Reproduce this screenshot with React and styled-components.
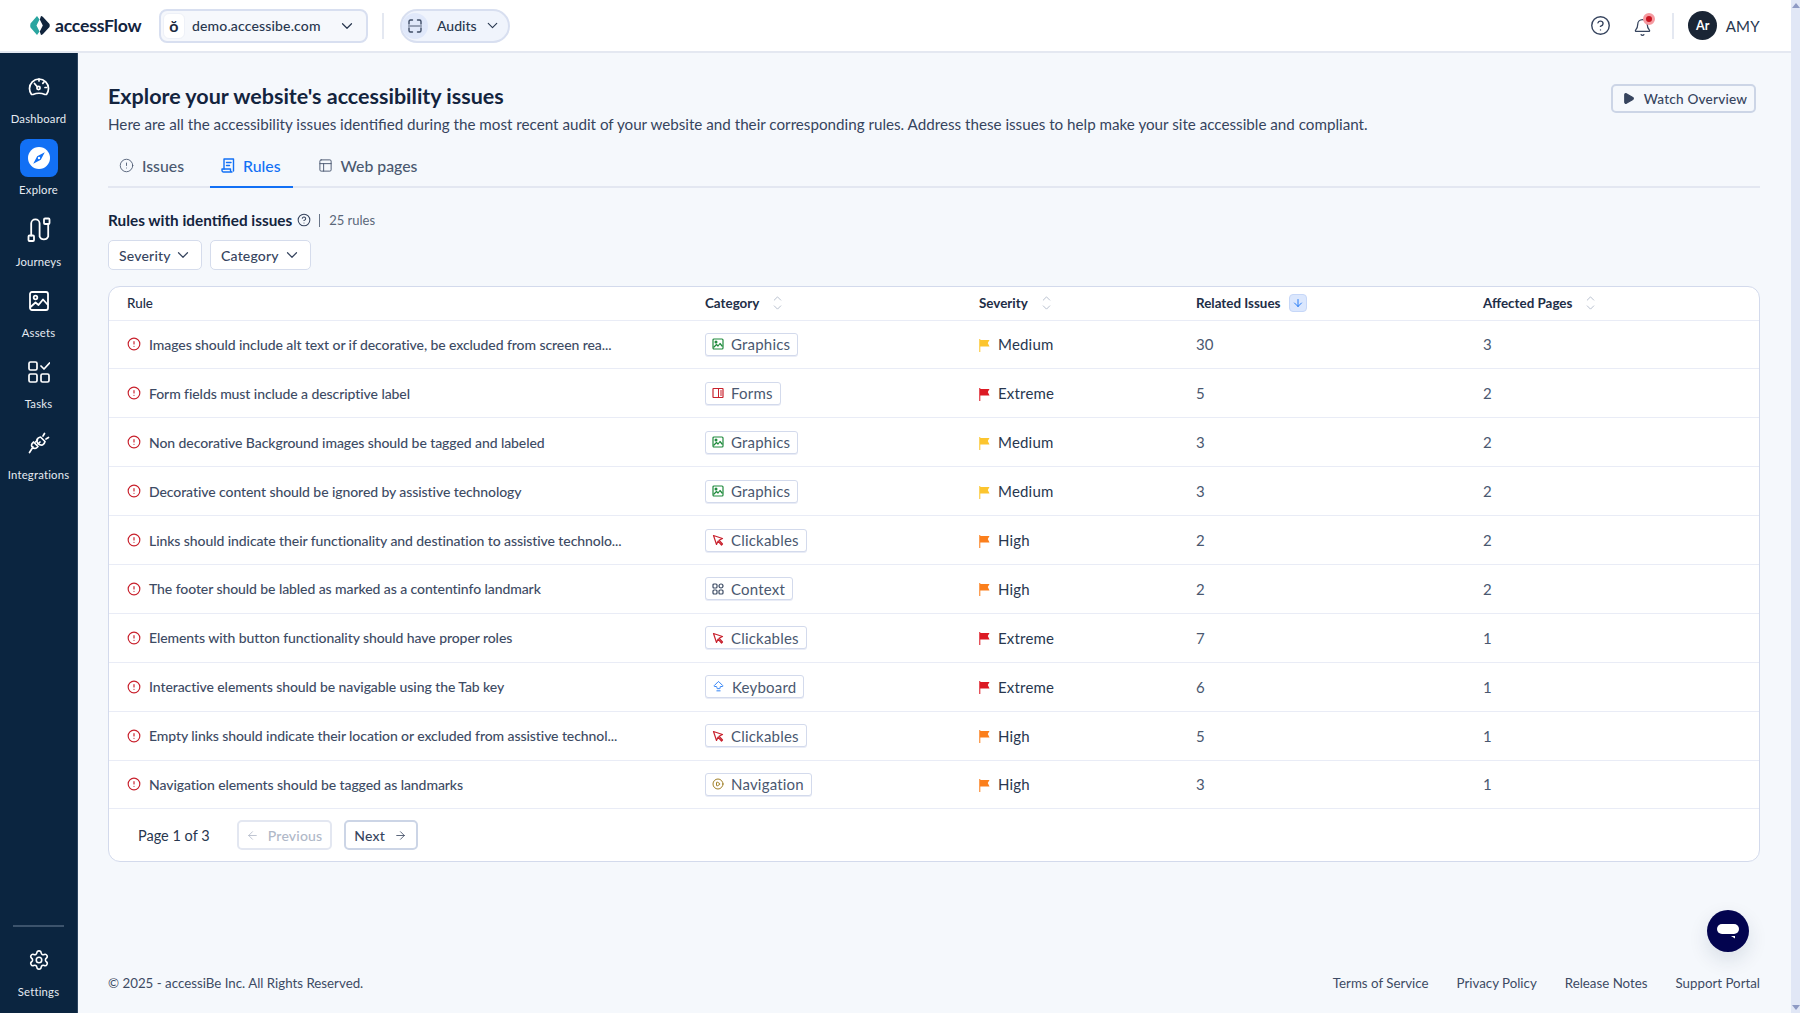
import React from 'react';
import styled, { createGlobalStyle } from 'styled-components';
import {
  ChevronDown, ChevronUp, CircleHelp, Bell, CircleAlert, PanelsTopLeft, ArrowLeft, ArrowRight,
  ArrowDown, ArrowBigUpDash, CirclePlay, Settings, Play,
} from 'lucide-react';

const GlobalStyle = createGlobalStyle`
  html, body { margin: 0; padding: 0; height: 100%; overflow: hidden; }
  body { font-family: "Lato", "Liberation Sans", sans-serif; color: #36445e; background: #f5f8fc; }
  #root { height: 100%; }
  * { box-sizing: border-box; }
`;

const Page = styled.div`
  display: flex;
  height: 1013px;
`;

const Shell = styled.div`
  flex: 1;
  min-width: 0;
  display: flex;
  flex-direction: column;
`;

const ScrollTrack = styled.div`
  width: 9px;
  background: #e1e7f6;
  display: flex;
  flex-direction: column;
  justify-content: space-between;
  align-items: center;
  padding: 3px 0;
`;

const Arrow = styled.span`
  width: 0;
  height: 0;
  border-left: 4px solid transparent;
  border-right: 4px solid transparent;
  ${p => (p.$down ? 'border-top: 5px solid #8e9ac4;' : 'border-bottom: 5px solid #8e9ac4;')}
`;

const Header = styled.header`
  height: 53px;
  flex: none;
  background: #fff;
  border-bottom: 2px solid #e4e8f1;
  display: flex;
  align-items: center;
  padding: 0 31px 0 30px;
`;

const Logo = styled.div`
  display: flex;
  align-items: center;
  gap: 5px;
  width: 129px;
  font-size: 17.6px;
  font-weight: 700;
  letter-spacing: -0.2px;
  color: #13243e;
`;

const DomainSelect = styled.div`
  width: 209px;
  height: 34px;
  border: 2px solid #d8dff0;
  border-radius: 8px;
  background: #f6f8fc;
  display: flex;
  align-items: center;
  padding: 0 10px 0 2px;
  font-size: 14px;
  font-weight: 500;
  letter-spacing: 0.15px;
  color: #28374f;
`;

const DomainIcon = styled.span`
  width: 22px;
  height: 26px;
  border-radius: 6px;
  background: #fff;
  border: 1px solid #eef1f8;
  margin-right: 7px;
  display: flex;
  align-items: center;
  justify-content: center;
  font-size: 16px;
  font-weight: 700;
  color: #1b2a40;
`;

const Grow = styled.span`
  flex: 1;
`;

const HeadDivider = styled.span`
  width: 2px;
  height: 26px;
  background: #e4e8f1;
  margin: ${p => p.$margin};
`;

const AuditsPill = styled.div`
  width: 110px;
  height: 34px;
  border: 2px solid #d8dff0;
  border-radius: 17px;
  background: #f0f4fc;
  display: flex;
  align-items: center;
  padding: 0 7px 0 0;
  font-size: 14px;
  font-weight: 500;
  color: #28374f;
`;

const AuditsIcon = styled.span`
  width: 26px;
  height: 26px;
  border-radius: 50%;
  background: #e0e8fa;
  display: flex;
  align-items: center;
  justify-content: center;
  margin-right: 9px;
`;

const HeadIcons = styled.div`
  margin-left: auto;
  display: flex;
  align-items: center;
`;

const BellWrap = styled.span`
  position: relative;
  display: flex;
  margin-left: 22px;
  margin-top: 3px;
`;

const BellDot = styled.span`
  position: absolute;
  top: -5px;
  right: -3px;
  width: 12px;
  height: 12px;
  border-radius: 50%;
  background: #c8121f;
  border: 3px solid #f59aa0;
`;

const Avatar = styled.span`
  width: 29px;
  height: 29px;
  border-radius: 50%;
  background: #1a2535;
  color: #fff;
  font-size: 12.5px;
  font-weight: 700;
  display: flex;
  align-items: center;
  justify-content: center;
  margin-right: 8.5px;
`;

const UserName = styled.span`
  font-size: 15px;
  color: #28374f;
  letter-spacing: 0.3px;
`;

const Body = styled.div`
  flex: 1;
  display: flex;
  min-height: 0;
`;

const Sidebar = styled.nav`
  width: 78px;
  flex: none;
  background: #0b2540;
  border-right: 1px solid #2d4560;
  display: flex;
  flex-direction: column;
  padding-top: 15px;
  padding-bottom: 13px;
`;

const NavList = styled.div`
  display: flex;
  flex-direction: column;
  gap: 12.3px;
  flex: 1;
`;

const NavItem = styled.a`
  display: flex;
  flex-direction: column;
  align-items: center;
  gap: 5px;
  color: #e6ebf2;
  font-size: 11.3px;
  line-height: 16px;
  letter-spacing: 0.2px;
  white-space: nowrap;
`;

const NavIcon = styled.span`
  width: 38px;
  height: 38px;
  border-radius: 8px;
  display: flex;
  align-items: center;
  justify-content: center;
  background: ${p => (p.$active ? '#1270f5' : 'transparent')};
`;

const SideRule = styled.div`
  height: 2px;
  margin: 0 13px 14px;
  background: #3c536c;
`;

const Content = styled.main`
  flex: 1;
  min-width: 0;
  display: flex;
  flex-direction: column;
  padding: 29px 31px 0 30px;
`;

const TitleRow = styled.div`
  display: flex;
  justify-content: space-between;
  align-items: flex-start;
`;

const Title = styled.h1`
  margin: 0 0 3px;
  font-size: 21.5px;
  line-height: 28px;
  font-weight: 700;
  color: #13243e;
`;

const Subtitle = styled.p`
  margin: 0;
  font-size: 15.2px;
  line-height: 22px;
  color: #36445e;
`;

const WatchButton = styled.button`
  height: 29px;
  width: 145px;
  margin: 2px 4px 0 0;
  padding: 0 0 0 2px;
  border: 2px solid #ccd5e6;
  border-radius: 5px;
  background: #f5f8fc;
  color: #36445e;
  font: 500 13.6px "Lato", sans-serif;
  letter-spacing: 0.2px;
  white-space: nowrap;
  display: flex;
  align-items: center;
  justify-content: center;
  gap: 9px;
`;

const Tabs = styled.div`
  display: flex;
  margin-top: 9px;
  border-bottom: 2px solid #e3e7f1;
  height: 44px;
`;

const Tab = styled.a`
  display: flex;
  align-items: center;
  gap: 8px;
  height: 44px;
  padding: 0 12px 0 11px;
  margin-right: 14px;
  font-size: 15.8px;
  font-weight: 500;
  color: ${p => (p.$active ? '#1270f5' : '#4a5870')};
  border-bottom: 2px solid ${p => (p.$active ? '#1270f5' : 'transparent')};
`;

const SectionRow = styled.div`
  display: flex;
  align-items: center;
  margin-top: 21px;
  height: 22px;
`;

const SectionTitle = styled.h2`
  margin: 0 5px 0 0;
  font-size: 15.3px;
  font-weight: 700;
  color: #13243e;
`;

const RuleCount = styled.span`
  margin-left: 8px;
  padding-left: 9px;
  border-left: 1px solid #6a7689;
  line-height: 13px;
  font-size: 13px;
  color: #5a6779;
`;

const Filters = styled.div`
  display: flex;
  gap: 8px;
  margin-top: 9px;
`;

const FilterButton = styled.button`
  height: 30px;
  padding: 0 9px 0 10px;
  width: ${p => p.$width}px;
  border: 1px solid #d5dcec;
  border-radius: 5px;
  background: #fff;
  color: #36445e;
  font: 500 14px "Lato", sans-serif;
  letter-spacing: 0.2px;
  display: flex;
  align-items: center;
  justify-content: space-between;
`;

const TableCard = styled.section`
  margin-top: 15.5px;
  background: #fff;
  border: 1px solid #d3daec;
  border-radius: 12px;
  overflow: hidden;
`;

const Row = styled.div`
  display: grid;
  grid-template-columns: 578px 274px 217px 287px 1fr;
  align-items: center;
  height: ${p => (p.$head ? '34px' : '48.9px')};
  padding-left: 18px;
  border-bottom: 1px solid #e9ecf6;
`;

const HeadCell = styled.div`
  display: flex;
  align-items: center;
  gap: ${p => p.$gap || 12}px;
  font-size: 13.4px;
  font-weight: ${p => (p.$light ? 500 : 700)};
  color: #1e2e47;
`;

const SortIcon = styled.span`
  display: flex;
  flex-direction: column;
  color: #a3adc0;
  margin-top: -1px;
  & > svg + svg { margin-top: -4px; }
`;

const SortActive = styled.span`
  width: 18px;
  height: 18px;
  border-radius: 4px;
  background: #dbe7fd;
  border: 1px solid #c6d7f8;
  display: flex;
  align-items: center;
  justify-content: center;
  color: #1270f5;
`;

const RuleCell = styled.div`
  display: flex;
  align-items: center;
  gap: 8px;
  font-size: 14px;
  font-weight: 500;
  letter-spacing: -0.08px;
  color: #3d4b64;
`;

const Tag = styled.span`
  display: inline-flex;
  align-items: center;
  gap: 7px;
  height: 23px;
  padding: 0 7px 0 6px;
  border: 1px solid #d3daec;
  border-radius: 3px;
  background: #fff;
  box-shadow: 0 1px 0 #e9ecf6;
  font-size: 15px;
  color: #4a5870;
  letter-spacing: 0.2px;
`;

const TagIcon = styled.span`
  display: flex;
  color: ${p => p.$color};
`;

const SeverityCell = styled.span`
  display: flex;
  align-items: center;
  gap: 8px;
  font-size: 15px;
  color: #28374f;
  letter-spacing: 0.2px;
  & > svg { margin-top: 2px; }
`;

const NumCell = styled.span`
  font-size: 15px;
  color: #4a5870;
`;

const Pager = styled.div`
  height: 52px;
  display: flex;
  align-items: center;
  padding-left: 29px;
`;

const PageLabel = styled.span`
  font-size: 14.5px;
  color: #28374f;
  margin-right: 27px;
`;

const PageButton = styled.button`
  height: 30px;
  width: ${p => p.$width}px;
  margin-right: 12px;
  border: 2px solid ${p => (p.disabled ? '#e3e7f1' : '#ccd5e6')};
  border-radius: 5px;
  background: #fff;
  color: ${p => (p.disabled ? '#b0b8c8' : '#36445e')};
  font: 500 14px "Lato", sans-serif;
  letter-spacing: 0.2px;
  display: flex;
  align-items: center;
  justify-content: center;
  gap: 9px;
`;

const Footer = styled.footer`
  margin-top: auto;
  height: 38.5px;
  display: flex;
  justify-content: space-between;
  font-size: 13.3px;
  line-height: 17px;
  color: #3d4b64;
`;

const FooterLinks = styled.div`
  display: flex;
  gap: 28px;
`;

const ChatButton = styled.button`
  position: fixed;
  left: 1707px;
  top: 910px;
  width: 42px;
  height: 42px;
  border: 0;
  border-radius: 50%;
  background: #03044f;
  box-shadow: 0 8px 20px rgba(20, 40, 70, 0.12);
  display: flex;
  align-items: center;
  justify-content: center;
  padding: 0;
`;

const navItems = [
  { label: 'Dashboard', icon: <DashIcon /> },
  { label: 'Explore', active: true, icon: <ExploreIcon /> },
  { label: 'Journeys', icon: <JourneyIcon /> },
  { label: 'Assets', icon: <AssetIcon /> },
  { label: 'Tasks', icon: <TaskIcon /> },
  { label: 'Integrations', icon: <PlugIcon /> },
];

const categories = {
  Graphics: { color: '#1f8a3c', icon: <ImgTag /> },
  Forms: { color: '#c8202c', icon: <FormTag /> },
  Clickables: { color: '#c8202c', icon: <CursorTag /> },
  Context: { color: '#3b4a63', icon: <ContextTag /> },
  Keyboard: { color: '#1270f5', icon: <ArrowBigUpDash size={13} strokeWidth={1.6} /> },
  Navigation: { color: '#94700f', icon: <CirclePlay size={12} strokeWidth={1.8} /> },
};

const severityColor = { Medium: '#fcc52e', Extreme: '#dc1a24', High: '#fb7f1c' };

const rules = [
  ['Images should include alt text or if decorative, be excluded from screen rea...', 'Graphics', 'Medium', 30, 3],
  ['Form fields must include a descriptive label', 'Forms', 'Extreme', 5, 2],
  ['Non decorative Background images should be tagged and labeled', 'Graphics', 'Medium', 3, 2],
  ['Decorative content should be ignored by assistive technology', 'Graphics', 'Medium', 3, 2],
  ['Links should indicate their functionality and destination to assistive technolo...', 'Clickables', 'High', 2, 2],
  ['The footer should be labled as marked as a contentinfo landmark', 'Context', 'High', 2, 2],
  ['Elements with button functionality should have proper roles', 'Clickables', 'Extreme', 7, 1],
  ['Interactive elements should be navigable using the Tab key', 'Keyboard', 'Extreme', 6, 1],
  ['Empty links should indicate their location or excluded from assistive technol...', 'Clickables', 'High', 5, 1],
  ['Navigation elements should be tagged as landmarks', 'Navigation', 'High', 3, 1],
];

function LogoMark() {
  return (
    <svg width="20" height="19" viewBox="0 0 20 19">
      <path d="M7 0 L0.5 7.5 Q0 9.5 0.5 11.5 L7 19 L9.5 15.5 L6.5 9.5 L9.5 3.5 Z" fill="#2aa5a0" />
      <path d="M11 0 Q12 0 13 1 L19.5 8 Q20 9.5 19.5 11 L13 18 Q12 19 11 19 L9.8 15.5 L12.8 9.5 L9.8 3.5 Z" fill="#10243c" />
    </svg>
  );
}

function DashIcon() {
  return (
    <svg width="22" height="20" viewBox="0 0 22 20" fill="none" stroke="#fff" strokeWidth="1.7" strokeLinecap="round" strokeLinejoin="round">
      <path d="M5 17.5 H3.5 C2.2 15.8 1.5 13.8 1.5 11.5 A9.5 9.5 0 0 1 20.5 11.5 C20.5 13.8 19.8 15.8 18.5 17.5 H17 Q11 15 5 17.5 Z" />
      <circle cx="10.5" cy="11" r="1.6" />
      <path d="M9 9.5 L6.5 6.5 M11 2 V4 M16 5 L14.8 6.4 M18.5 10.5 H17" />
    </svg>
  );
}

function ExploreIcon() {
  return (
    <svg width="24" height="24" viewBox="0 0 24 24">
      <circle cx="12" cy="12" r="11" fill="#fff" />
      <path d="M17.8 6.2 L13.8 13.8 L6.2 17.8 L10.2 10.2 Z" fill="#1270f5" />
      <circle cx="12" cy="12" r="1.2" fill="#fff" />
    </svg>
  );
}

function JourneyIcon() {
  return (
    <svg width="24" height="26" viewBox="0 0 24 26" fill="none" stroke="#fff" strokeWidth="1.8" strokeLinecap="round" strokeLinejoin="round">
      <rect x="17" y="1.5" width="5.5" height="5.5" rx="1" />
      <rect x="1.5" y="18.5" width="5.5" height="5.5" rx="1" />
      <path d="M4.2 18.5 V6.5 A4.2 4.2 0 0 1 12.6 6.5 V19.5 A4.6 4.6 0 0 0 21.2 19.5 V7" />
    </svg>
  );
}

function AssetIcon() {
  return (
    <svg width="20" height="20" viewBox="0 0 20 20" fill="none" stroke="#fff" strokeWidth="1.8" strokeLinecap="round" strokeLinejoin="round">
      <rect x="1" y="1" width="18" height="18" rx="2" />
      <circle cx="6.5" cy="6.5" r="1.8" />
      <path d="M1.5 16 L6.5 11.5 L9.5 14 L14 8.5 L18.5 13.5" />
    </svg>
  );
}

function TaskIcon() {
  return (
    <svg width="22" height="22" viewBox="0 0 22 22" fill="none" stroke="#fff" strokeWidth="1.7" strokeLinecap="round" strokeLinejoin="round">
      <rect x="1" y="1" width="8" height="8" rx="1.5" />
      <rect x="1" y="13" width="8" height="8" rx="1.5" />
      <rect x="13" y="13" width="8" height="8" rx="1.5" />
      <path d="M13 5 L16 8 L21.5 2" />
    </svg>
  );
}

function PlugIcon() {
  return (
    <svg width="22" height="22" viewBox="0 0 22 22" fill="none" stroke="#fff" strokeWidth="1.7" strokeLinecap="round" strokeLinejoin="round">
      <path d="M12.5 5 L17 9.5 Q16.5 12 14.5 13 Q12 13.5 10 11.5 Q8.5 9.5 9 7.5 Q10 5.5 12.5 5 Z" />
      <path d="M15 4 L16.5 1.5 M18 7 L20.5 5.5" />
      <path d="M9.5 8 L7.5 10 M12 10 L10 12" />
      <path d="M9 15.5 A3 3 0 0 1 4.5 11 L5.5 10 L10 14.5 Z M5 15 L1.5 20.5" />
    </svg>
  );
}

function RulesIcon() {
  return (
    <svg width="14" height="15" viewBox="0 0 14 15" fill="none" stroke="#1270f5" strokeWidth="1.4" strokeLinecap="round" strokeLinejoin="round">
      <path d="M3 11 V1 H12.5 V13" />
      <path d="M1 11 H9.5 V12.5 A1.5 1.5 0 0 0 11 14 H2.5 A1.5 1.5 0 0 1 1 12.5 Z" />
      <path d="M5.5 4.5 H10 M5.5 7.5 H8.5" />
    </svg>
  );
}

function AuditIcon() {
  return (
    <svg width="14" height="14" viewBox="0 0 14 14" fill="none" stroke="#3d4b64" strokeWidth="1.4" strokeLinecap="round">
      <path d="M1 5 V2.5 Q1 1 2.5 1 H4.5 M9.5 1 H11.5 Q13 1 13 2.5 V5 M1 9 V11.5 Q1 13 2.5 13 H4.5 M9.5 13 H11.5 Q13 13 13 11.5 V9" />
      <path d="M0.5 7 H13.5" strokeOpacity="0.6" />
    </svg>
  );
}

function ImgTag() {
  return (
    <svg width="12" height="12" viewBox="0 0 12 12" fill="none" stroke="currentColor" strokeWidth="1.2" strokeLinejoin="round">
      <rect x="1" y="1" width="10" height="10" rx="1" />
      <circle cx="4" cy="4" r="0.9" fill="currentColor" />
      <path d="M1.5 9.5 L4.5 6.5 L6 8 L8 5.5 L10.5 8.5" />
    </svg>
  );
}

function FormTag() {
  return (
    <svg width="12" height="12" viewBox="0 0 12 12" fill="none" stroke="currentColor" strokeWidth="1.2">
      <rect x="1" y="1.5" width="10" height="9" rx="0.5" />
      <path d="M6.5 1.5 V10.5 M8 4 H10 M8 6 H10 M8 8 H10" strokeWidth="1" />
    </svg>
  );
}

function CursorTag() {
  return (
    <svg width="12" height="12" viewBox="0 0 12 12" fill="none" stroke="currentColor" strokeWidth="1.2" strokeLinejoin="round" strokeLinecap="round">
      <path d="M1.5 1.5 L10.5 4.5 L7 6.2 L10.5 10 L9.5 11 L6 7.2 L4.5 10.5 Z" />
    </svg>
  );
}

function ContextTag() {
  return (
    <svg width="12" height="12" viewBox="0 0 12 12" fill="none" stroke="currentColor" strokeWidth="1.2">
      <rect x="1" y="1" width="4" height="4" rx="1" />
      <rect x="7" y="1" width="4" height="4" rx="2" />
      <rect x="1" y="7" width="4" height="4" rx="1" />
      <rect x="7" y="7" width="4" height="4" rx="1" />
    </svg>
  );
}

function Flag({ color }) {
  return (
    <svg width="11" height="13" viewBox="0 0 11 13">
      <path d="M0 0 H1.4 V13 H0 Z" fill={color} fillOpacity="0.75" />
      <path d="M1 1 H10.5 L8.8 4 L10.5 7.5 H1 Z" fill={color} />
    </svg>
  );
}

function Sort() {
  return (
    <SortIcon>
      <ChevronUp size={13} strokeWidth={1.4} />
      <ChevronDown size={13} strokeWidth={1.4} />
    </SortIcon>
  );
}

export default function App() {
  return (
    <Page>
      <GlobalStyle />
      <Shell>
        <Header>
          <Logo><LogoMark />accessFlow</Logo>
          <DomainSelect>
            <DomainIcon>ŏ</DomainIcon>
            demo.accessibe.com
            <Grow />
            <ChevronDown size={18} color="#28374f" strokeWidth={1.6} />
          </DomainSelect>
          <HeadDivider $margin="0 16px 0 14px" />
          <AuditsPill>
            <AuditsIcon><AuditIcon /></AuditsIcon>
            Audits
            <Grow />
            <ChevronDown size={17} color="#28374f" strokeWidth={1.6} />
          </AuditsPill>
          <HeadIcons>
            <CircleHelp size={21} color="#36445e" strokeWidth={1.6} />
            <BellWrap>
              <Bell size={19} color="#36445e" strokeWidth={1.6} />
              <BellDot />
            </BellWrap>
            <HeadDivider $margin="0 14.5px 0 19.5px" />
            <Avatar>Ar</Avatar>
            <UserName>AMY</UserName>
          </HeadIcons>
        </Header>
        <Body>
          <Sidebar>
            <NavList>
              {navItems.map(item => (
                <NavItem key={item.label}>
                  <NavIcon $active={item.active}>{item.icon}</NavIcon>
                  {item.label}
                </NavItem>
              ))}
            </NavList>
            <SideRule />
            <NavItem>
              <NavIcon><Settings size={22} color="#fff" strokeWidth={1.7} /></NavIcon>
              Settings
            </NavItem>
          </Sidebar>
          <Content>
            <TitleRow>
              <div>
                <Title>Explore your website's accessibility issues</Title>
                <Subtitle>Here are all the accessibility issues identified during the most recent audit of your website and their corresponding rules. Address these issues to help make your site accessible and compliant.</Subtitle>
              </div>
              <WatchButton><Play size={13} fill="#36445e" color="#36445e" />Watch Overview</WatchButton>
            </TitleRow>
            <Tabs>
              <Tab><CircleAlert size={15} strokeWidth={1.4} />Issues</Tab>
              <Tab $active><RulesIcon />Rules</Tab>
              <Tab><PanelsTopLeft size={15} strokeWidth={1.5} />Web pages</Tab>
            </Tabs>
            <SectionRow>
              <SectionTitle>Rules with identified issues</SectionTitle>
              <CircleHelp size={14} color="#36445e" strokeWidth={1.8} />
              <RuleCount>25 rules</RuleCount>
            </SectionRow>
            <Filters>
              <FilterButton $width={94}>Severity<ChevronDown size={18} strokeWidth={1.6} /></FilterButton>
              <FilterButton $width={101}>Category<ChevronDown size={18} strokeWidth={1.6} /></FilterButton>
            </Filters>
            <TableCard>
              <Row $head>
                <HeadCell $light>Rule</HeadCell>
                <HeadCell>Category<Sort /></HeadCell>
                <HeadCell>Severity<Sort /></HeadCell>
                <HeadCell $gap={9}>Related Issues<SortActive><ArrowDown size={12} strokeWidth={1.8} /></SortActive></HeadCell>
                <HeadCell>Affected Pages<Sort /></HeadCell>
              </Row>
              {rules.map(([text, category, severity, issues, pages]) => (
                <Row key={text}>
                  <RuleCell>
                    <CircleAlert size={14} color="#c8202c" strokeWidth={2} />
                    {text}
                  </RuleCell>
                  <div>
                    <Tag>
                      <TagIcon $color={categories[category].color}>{categories[category].icon}</TagIcon>
                      {category}
                    </Tag>
                  </div>
                  <SeverityCell><Flag color={severityColor[severity]} />{severity}</SeverityCell>
                  <NumCell>{issues}</NumCell>
                  <NumCell>{pages}</NumCell>
                </Row>
              ))}
              <Pager>
                <PageLabel>Page 1 of 3</PageLabel>
                <PageButton $width={95} disabled><ArrowLeft size={13} strokeWidth={1.5} />Previous</PageButton>
                <PageButton $width={74}>Next<ArrowRight size={13} strokeWidth={1.5} /></PageButton>
              </Pager>
            </TableCard>
            <Footer>
              <span>© 2025 - accessiBe Inc. All Rights Reserved.</span>
              <FooterLinks>
                <span>Terms of Service</span>
                <span>Privacy Policy</span>
                <span>Release Notes</span>
                <span>Support Portal</span>
              </FooterLinks>
            </Footer>
          </Content>
        </Body>
      </Shell>
      <ScrollTrack><Arrow /><Arrow $down /></ScrollTrack>
      <ChatButton aria-label="Chat">
        <svg width="22" height="16" viewBox="0 0 22 16">
          <rect x="0" y="1" width="22" height="10" rx="5" fill="#fff" />
          <path d="M14 13 L18 13 L18 15.5 Z" fill="#fff" />
        </svg>
      </ChatButton>
    </Page>
  );
}
